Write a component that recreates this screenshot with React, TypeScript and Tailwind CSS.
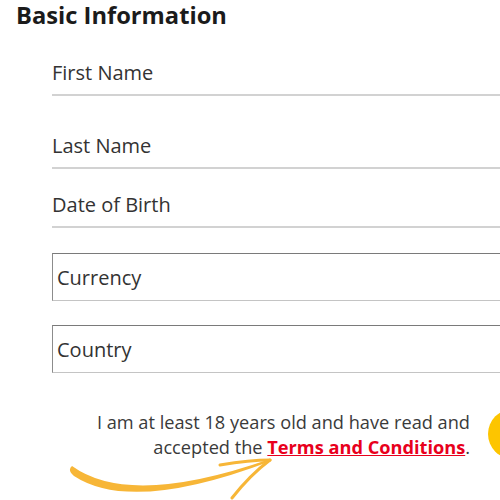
import React from "react";

export default function App() {
  return (
    <div className="relative w-[500px] h-[500px] overflow-hidden bg-white font-['Open_Sans',sans-serif] text-[#333]">
      <h2 className="pl-4 text-[23.7px] font-bold leading-[30px] text-[#1b1b1b]">Basic Information</h2>
      <div className="ml-[52px] w-[470px]">
        <div className="pt-[31px] pb-[9px] border-b-2 border-[#d2d2d2] text-[20px] leading-[24px]">First Name</div>
        <div className="pt-[38px] pb-[9px] border-b-2 border-[#d2d2d2] text-[20px] leading-[24px]">Last Name</div>
        <div className="pt-[24px] pb-[9px] border-b-2 border-[#d2d2d2] text-[20px] leading-[24px]">Date of Birth</div>
        <div className="mt-[25px] pt-[12px] pb-[10px] pl-[4px] border border-t-[#7a7a7a] border-l-[#8c8c8c] border-b-[#c4c4c4] border-r-[#c4c4c4] text-[20px] leading-[24px]">Currency</div>
        <div className="mt-[24px] pt-[12px] pb-[10px] pl-[4px] border border-t-[#7a7a7a] border-l-[#8c8c8c] border-b-[#c4c4c4] border-r-[#c4c4c4] text-[20px] leading-[24px]">Country</div>
      </div>
      <p className="mt-[37px] w-[470px] text-right text-[18.2px] leading-[25px] text-[#3a3a3a]">
        I am at least 18 years old and have read and
        <br />
        accepted the{" "}
        <a className="font-bold text-[#e8001c] underline">Terms and Conditions</a>.
      </p>
      <div className="absolute left-[488px] top-[409px] w-[50px] h-[50px] rounded-full bg-[#fdc500]" />
      <svg className="absolute left-[60px] top-[450px]" width="230" height="50" viewBox="0 0 230 50">
        <path d="M12 16 Q70 58 210 9 L211 11 Q72 64 14 26 Q7 20 12 16 Z" fill="#f7b637" />
        <path d="M160 15 Q190 10 210 10" stroke="#f7b637" strokeWidth="3" fill="none" strokeLinecap="round" />
        <path d="M172 48 Q190 25 210 10" stroke="#f7b637" strokeWidth="3" fill="none" strokeLinecap="round" />
      </svg>
    </div>
  );
}
